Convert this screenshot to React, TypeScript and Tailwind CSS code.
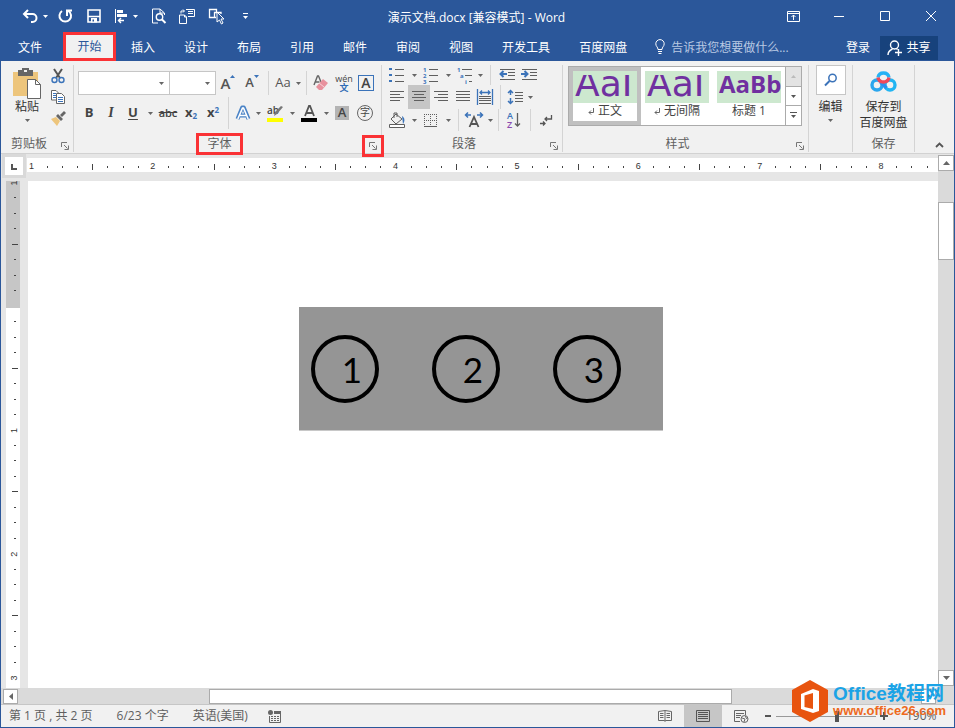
import type { ReactNode } from 'react';

interface IconProps {
  w?: number;
  h?: number;
  children: ReactNode;
}

const TABS = ['插入', '设计', '布局', '引用', '邮件', '审阅', '视图', '开发工具', '百度网盘'];

const STYLES = [
  { sample: 'AaI', label: '正文', mark: true, active: true, text: "font-['DejaVu_Sans'] text-[36px]" },
  { sample: 'AaI', label: '无间隔', mark: true, active: false, text: "font-['DejaVu_Sans'] text-[36px]" },
  { sample: 'AaBb', label: '标题 1', mark: false, active: false, text: "font-['Open_Sans'] font-bold text-[24px]" },
];

const BLUE = '#3b73b9';
const GRAY = '#5f5f5f';

function Icon({ w = 16, h = 16, children }: IconProps) {
  return (
    <svg width={w} height={h} viewBox={`0 0 ${w} ${h}`} fill="none" className="shrink-0 overflow-visible" aria-hidden="true">
      {children}
    </svg>
  );
}

function Tool({ label, className = 'w-[22px]', children }: { label: string; className?: string; children: ReactNode }) {
  return (
    <button type="button" aria-label={label} className={`flex h-full shrink-0 items-center justify-center ${className}`}>
      {children}
    </button>
  );
}

function Caret({ className = 'w-3' }: { className?: string }) {
  return (
    <button type="button" aria-label="更多选项" className={`flex h-full shrink-0 items-center justify-center ${className}`}>
      <Icon w={5} h={3}><path d="M0 0h5L2.5 3z" fill="#666" /></Icon>
    </button>
  );
}

function Divider({ className = 'w-3' }: { className?: string }) {
  return (
    <div className={`flex h-full shrink-0 justify-center ${className}`}>
      <div className="h-full w-px bg-[#d4d4d4]" />
    </div>
  );
}

function Launcher({ marked = false }: { marked?: boolean }) {
  return (
    <button
      type="button"
      aria-label="对话框启动器"
      className={`absolute right-0 -bottom-0.5 flex h-4 w-4 items-center justify-center ${marked ? 'z-10 outline-3 outline-[#fa3235]' : ''}`}
    >
      <Icon w={8} h={8}>
        <path d="M.5 5V.5H6M3 3l3.500 3.500M7.500 3.500v4h-4" stroke="#777" />
      </Icon>
    </button>
  );
}

function Group({ label, className, launcher, marked, children }: {
  label: string; className: string; launcher?: boolean; marked?: boolean; children: ReactNode;
}) {
  return (
    <section className={`mt-1 flex shrink-0 flex-col border-r border-[#d4d4d4] ${className}`}>
      <div className="min-h-0 flex-1">{children}</div>
      <div className={`relative flex h-4 items-center justify-center text-[#5f5f5f] ${launcher ? 'pr-4' : ''}`}>
        <span className={marked ? 'relative z-10 px-2 outline-3 outline-[#fa3235]' : ''}>{label}</span>
        {launcher && <Launcher marked={marked} />}
      </div>
    </section>
  );
}

function Lines({ rows, color = GRAY }: { rows: [number, number][]; color?: string }) {
  return (
    <Icon>
      {rows.map(([x1, x2], i) => (
        <path key={i} d={`M${x1} ${2.5 + i * 3}H${x2}`} stroke={color} />
      ))}
    </Icon>
  );
}

function TitleBar() {
  return (
    <header className="flex h-8 shrink-0 items-center bg-[#2b579a] text-white">
      <div className="flex h-full flex-1 items-center pl-[18px]">
        <Tool label="撤消" className="w-[22px]">
          <Icon><path d="M2 6h8.500a4 4 0 0 1 0 8H9M6 2L2 6l4 4" stroke="#fff" strokeWidth="2" /></Icon>
        </Tool>
        <button type="button" aria-label="撤消列表" className="w-3 pl-0.5"><Icon w={5} h={3}><path d="M0 0h5L2.5 3z" fill="#fff" /></Icon></button>
        <Tool label="重做" className="w-6">
          <Icon><path d="M5 3a5.800 5.800 0 1 0 6.500 0M10 8V2.500h5" stroke="#fff" strokeWidth="2" /></Icon>
        </Tool>
        <Tool label="保存" className="w-[34px]">
          <Icon><path d="M2 2h12v12H2zM2 8.500h12" stroke="#fff" strokeWidth="1.600" /><path d="M5 10h6v4.500H5z" fill="#fff" /><path d="M6.500 11.500h1.500v2H6.500z" fill="#2b579a" /></Icon>
        </Tool>
        <Tool label="对齐" className="w-5">
          <Icon><path d="M2.500 1v14" stroke="#fff" /><path d="M4 2h6v3H4zM4 6h10v3H4z" fill="#fff" /><path d="M11 12.500H5M8 10l-2.500 2.500L8 15" stroke="#fff" strokeWidth="1.400" /></Icon>
        </Tool>
        <button type="button" aria-label="对齐列表" className="w-3 pl-0.5"><Icon w={5} h={3}><path d="M0 0h5L2.5 3z" fill="#fff" /></Icon></button>
        <Tool label="打印预览" className="w-8">
          <Icon><path d="M7 15H1.500V1H9l4.500 4v2M9 1v4h4" stroke="#fff" /><circle cx="8.500" cy="9" r="3.200" stroke="#fff" strokeWidth="1.400" /><path d="M11 11.500l3.500 3.500" stroke="#fff" strokeWidth="2" /></Icon>
        </Tool>
        <Tool label="比较文档" className="w-6">
          <Icon w={18}><path d="M6.500 7H1.500v8.500h7V9L6.500 7v2h2M8 1.500h8.500v7H10M10 3.500h5M10 5.500h5M3 5.500V3h3M5 1.500L6.500 3 5 4.500" stroke="#fff" /></Icon>
        </Tool>
        <Tool label="选择对象" className="w-9">
          <Icon w={18}><path d="M8 9.500H1.500v-8h7V4M6.500 10V4.500H13V6" stroke="#fff" strokeWidth="1.300" /><path d="M9 4l7 7h-3l2 4-1.600 1L11.500 12 9 14z" fill="#2b579a" stroke="#fff" /></Icon>
        </Tool>
        <Tool label="自定义快速访问工具栏" className="w-5">
          <Icon w={7} h={8}><path d="M1 1.500h5" stroke="#fff" /><path d="M1 4h5L3.500 7z" fill="#fff" /></Icon>
        </Tool>
      </div>
      <h1 className="mr-5 pt-1 text-xs">演示文档.docx [兼容模式] - Word</h1>
      <div className="flex h-full flex-1 justify-end">
        <Tool label="功能区显示选项" className="w-[46px]">
          <Icon w={13} h={11}><path d="M.5.5h12v10H.5zM.5 2.500h12M6.500 9V4M4.500 6l2-2 2 2" stroke="#fff" /></Icon>
        </Tool>
        <Tool label="最小化" className="w-[46px]"><Icon w={10} h={10}><path d="M0 5.500h10" stroke="#fff" /></Icon></Tool>
        <Tool label="最大化" className="w-[46px]"><Icon w={10} h={10}><path d="M.5.5h9v9h-9z" stroke="#fff" /></Icon></Tool>
        <Tool label="关闭" className="w-[46px]"><Icon w={10} h={10}><path d="M0 0l10 10M10 0L0 10" stroke="#fff" /></Icon></Tool>
      </div>
    </header>
  );
}

function TabBar() {
  return (
    <nav className="flex h-[29px] shrink-0 items-center bg-[#2b579a] text-xs text-white">
      <button type="button" className="h-full w-[62px] shrink-0 pr-1 pt-0.5">文件</button>
      <button type="button" className="h-full w-[53px] shrink-0 border-3 border-[#fa3235] bg-[#f1f1f1] text-[#2b579a]">开始</button>
      {TABS.map((tab) => (
        <button key={tab} type="button" className="h-full shrink-0 pr-[14px] pl-[15px] pt-0.5 whitespace-nowrap">{tab}</button>
      ))}
      <label className="flex min-w-0 flex-1 items-center gap-1.5 pl-3.5">
        <Icon w={10} h={15}>
          <path d="M3 10.500C3 8 .8 7.500.8 4.800a4.200 4.200 0 0 1 8.400 0C9.200 7.500 7 8 7 10.500zM3 12.500h4M3.500 14.500h3" stroke="#fff" />
        </Icon>
        <input aria-label="告诉我您想要做什么" placeholder="告诉我您想要做什么..." className="w-full min-w-0 pt-0.5 outline-none placeholder:text-[#b9c9e3]" />
      </label>
      <button type="button" className="shrink-0 px-2.5 pt-0.5">登录</button>
      <button type="button" className="mr-4 mb-px flex h-6 w-[58px] shrink-0 items-center justify-center gap-1 self-end bg-[#17427c]">
        <Icon w={15} h={16}>
          <circle cx="7.500" cy="5" r="4" stroke="#fff" strokeWidth="1.400" /><path d="M1 15c0-3 2-5 4.500-6M9.500 8.500l1 1M8 12.500h7M11.500 9v7" stroke="#fff" strokeWidth="1.400" />
        </Icon>
        共享
      </button>
    </nav>
  );
}

function Clipboard() {
  return (
    <Group label="剪贴板" className="w-[73px]" launcher>
      <div className="flex">
        <button type="button" className="flex w-[46px] flex-col items-center gap-1 pt-0.5 pl-1.5 text-[#333]">
          <Icon w={30} h={32}>
            <path d="M1 5h25v24H1z" fill="#edc57c" />
            <path d="M6 3h4V1h7v2h4v6H6z" fill="#666" /><path d="M12 3h3v2h-3z" fill="#f1f1f1" />
            <path d="M15.500 12.500h8l5 5v14h-13z" fill="#fff" stroke="#666" /><path d="M23.500 12.500v5h5" stroke="#666" />
          </Icon>
          <span className="-mt-1">粘贴</span>
          <Icon w={5} h={3}><path d="M0 0h5L2.5 3z" fill="#666" /></Icon>
        </button>
        <div className="grid h-16 grid-rows-3">
          <Tool label="剪切">
            <Icon><path d="M4 1l6 9M12 1L6 10" stroke="#555" strokeWidth="2" /><circle cx="4.500" cy="12" r="2.500" stroke={BLUE} strokeWidth="1.400" /><circle cx="11.500" cy="12" r="2.500" stroke={BLUE} strokeWidth="1.400" /></Icon>
          </Tool>
          <Tool label="复制">
            <Icon><path d="M1.500 1.500H6L8.500 4v7h-7z" fill="#fff" stroke="#666" /><path d="M3 4.500h3M3 6.500h4M3 8.500h4" stroke={BLUE} /><path d="M6.500 4.500h5l3 3v7h-8z" fill="#fff" stroke="#666" /><path d="M8 8.500h5M8 10.500h5M8 12.500h5" stroke={BLUE} /></Icon>
          </Tool>
          <Tool label="格式刷">
            <Icon><path d="M1 9l5-2 4 4-3 5z" fill="#edc57c" /><path d="M6 6l2-2 5 5-2 2zM10 5l4-4 2 2-4 4z" fill="#666" /></Icon>
          </Tool>
        </div>
      </div>
    </Group>
  );
}

function FontGroup() {
  return (
    <Group label="字体" className="w-[308px]" launcher marked>
      <div className="flex flex-col gap-0.5 pt-1.5 pl-1">
        <div className="flex h-6 items-center">
          <div className="flex h-6 w-[92px] border border-[#c6c6c6] bg-white">
            <input aria-label="字体名称" className="min-w-0 flex-1 outline-none" />
            <Caret className="w-4" />
          </div>
          <div className="flex h-6 w-[46px] border border-l-0 border-[#c6c6c6] bg-white">
            <input aria-label="字号" className="min-w-0 flex-1 outline-none" />
            <Caret className="w-4" />
          </div>
          <Tool label="增大字号" className="w-6">
            <span className="text-[15px] font-semibold text-[#555]">A</span><span className="self-start pt-1"><Icon w={5} h={3}><path d="M0 3h5L2.500 0z" fill={BLUE} /></Icon></span>
          </Tool>
          <Tool label="减小字号" className="w-6">
            <span className="text-[13px] font-semibold text-[#555]">A</span><span className="self-start pt-1"><Icon w={5} h={3}><path d="M0 0h5L2.5 3z" fill={BLUE} /></Icon></span>
          </Tool>
          <Divider className="w-2" />
          <Tool label="更改大小写" className="w-[22px]"><span className="text-[13px] text-[#555]">Aa</span></Tool>
          <Caret className="w-2" />
          <Divider className="w-2" />
          <Tool label="清除格式">
            <Icon><path d="M1 10L4.500 1h1L8 7M2.500 7h4" stroke="#666" strokeWidth="1.400" /><path d="M10 4l5 4-6 7H6l-3-3z" fill="#e8919d" /><path d="M6 8l5 4" stroke="#f7d3d8" /></Icon>
          </Tool>
          <Tool label="拼音指南" className="w-6">
            <span className="flex flex-col items-center text-[9px] leading-[9px] text-[#444]">wén<span className="font-bold text-[#2f6cb5]">文</span></span>
          </Tool>
          <Tool label="字符边框" className="w-5">
            <span className="flex h-4 w-4 items-center justify-center border border-[#3b73b9] text-sm font-semibold text-[#444]">A</span>
          </Tool>
        </div>
        <div className="flex h-8 items-center text-[#444]">
          <Tool label="加粗"><span className="text-[13px] font-bold">B</span></Tool>
          <Tool label="倾斜"><span className="font-['Liberation_Serif'] text-sm font-bold italic">I</span></Tool>
          <Tool label="下划线"><span className="text-[13px] font-bold underline underline-offset-2">U</span></Tool>
          <Caret />
          <Tool label="删除线" className="w-6"><span className="text-[11px] font-semibold line-through">abc</span></Tool>
          <Tool label="下标"><span className="text-[13px] font-bold">x<sub className="text-[8px] text-[#3b73b9]">2</sub></span></Tool>
          <Tool label="上标"><span className="text-[13px] font-bold">x<sup className="text-[8px] text-[#3b73b9]">2</sup></span></Tool>
          <Divider className="w-2" />
          <Tool label="文本效果">
            <Icon><path d="M2.500 14L7.200 2.500h1.600L13.500 14M5 10.500h6" stroke="#4a83c6" strokeWidth="4" strokeLinejoin="round" /><path d="M2.800 14L7.500 3h1l4.700 11M5 10.500h6" stroke="#fff" strokeWidth="1.600" /></Icon>
          </Tool>
          <Caret className="w-2" />
          <Tool label="突出显示" className="w-[26px]">
            <Icon w={17} h={17}><text x="0" y="9" fontSize="10" fontFamily="Open Sans" fontWeight="600" fill="#444">ab</text><path d="M16 2l-6 7-3 2 1-4 6-6z" fill="#777" /><path d="M0 13h16v4H0z" fill="#ff0" /></Icon>
          </Tool>
          <Caret className="w-2" />
          <Tool label="字体颜色" className="w-[26px]">
            <Icon w={17} h={17}><path d="M4 11L8 1h1l4 10M5.500 8h6" stroke="#555" strokeWidth="1.800" /><path d="M0 13h16v4H0z" fill="#000" /></Icon>
          </Tool>
          <Caret className="w-2" />
          <Tool label="字符底纹" className="w-6"><span className="flex h-3.5 w-3.5 items-center justify-center bg-[#b4b4b4] text-[13px] font-semibold">A</span></Tool>
          <Tool label="带圈字符"><span className="flex h-4 w-4 items-center justify-center rounded-full border border-[#666] text-[10px]">字</span></Tool>
        </div>
      </div>
    </Group>
  );
}

function ParagraphGroup() {
  return (
    <Group label="段落" className="w-[181px]" launcher>
      <div className="flex flex-col pl-1">
        <div className="flex h-5 items-center">
          <Tool label="项目符号">
            <Icon><path d="M0 1h3v2H0zM0 7h3v2H0zM0 13h3v2H0z" fill={BLUE} /><path d="M6 2.500h9M6 8.500h9M6 14.500h9" stroke={GRAY} /></Icon>
          </Tool>
          <Caret />
          <Tool label="编号">
            <Icon><text x="0" y="5" fontSize="6" fontWeight="bold" fill={BLUE}>1</text><text x="0" y="11" fontSize="6" fontWeight="bold" fill={BLUE}>2</text><text x="0" y="17" fontSize="6" fontWeight="bold" fill={BLUE}>3</text><path d="M6 2.500h9M6 8.500h9M6 14.500h9" stroke={GRAY} /></Icon>
          </Tool>
          <Caret />
          <Tool label="多级列表">
            <Icon><text x="0" y="5" fontSize="6" fontWeight="bold" fill={BLUE}>1</text><text x="3" y="11" fontSize="6" fontWeight="bold" fill={BLUE}>a</text><text x="8" y="17" fontSize="6" fontWeight="bold" fill={BLUE}>i</text><path d="M5 2.500h10M8 8.500h7M12 14.500h3" stroke={GRAY} /></Icon>
          </Tool>
          <Caret className="w-2" />
          <Divider className="w-3" />
          <Tool label="减少缩进">
            <Icon><path d="M1 2.500h15M9 5.500h7M9 8.500h7M1 12.500h15" stroke={GRAY} /><path d="M8 7H2M4.500 4L1.500 7l3 3" stroke={BLUE} strokeWidth="2" /></Icon>
          </Tool>
          <Tool label="增加缩进">
            <Icon><path d="M1 2.500h15M9 5.500h7M9 8.500h7M1 12.500h15" stroke={GRAY} /><path d="M0 7h6M3.500 4l3 3-3 3" stroke={BLUE} strokeWidth="2" /></Icon>
          </Tool>
        </div>
        <div className="flex h-6 items-center">
          <Tool label="左对齐"><Lines rows={[[1, 15], [1, 11], [1, 15], [1, 11]]} /></Tool>
          <Tool label="居中" className="w-[22px] bg-[#c6c6c6]"><Lines rows={[[1, 15], [3, 13], [1, 15], [3, 13]]} /></Tool>
          <Tool label="右对齐"><Lines rows={[[1, 15], [5, 15], [1, 15], [5, 15]]} /></Tool>
          <Tool label="两端对齐"><Lines rows={[[1, 15], [1, 15], [1, 15], [1, 15]]} /></Tool>
          <Tool label="分散对齐">
            <Icon><path d="M.5 0v16M15.500 0v16M3 3.500h10M5 1.500L3 3.500l2 2M11 1.500l2 2-2 2" stroke={BLUE} strokeWidth="1.300" /><path d="M2 7.500h12M2 9.500h12M2 11.500h12M2 14.500h12" stroke={GRAY} /></Icon>
          </Tool>
          <Divider className="w-2" />
          <Tool label="行距">
            <Icon><path d="M3.500 1v5M1 4l2.500-2.500L6 4M3.500 9v6M1 12l2.500 2.500L6 12" stroke={BLUE} strokeWidth="1.500" /><path d="M8 3.500h8M8 6.500h8M8 9.500h8M8 12.500h8" stroke={GRAY} /></Icon>
          </Tool>
          <Caret className="w-2" />
        </div>
        <div className="flex h-[22px] items-center">
          <Tool label="底纹">
            <Icon><path d="M7 2l6 5-6 5-5-5zM5 6V1h3v4" stroke={GRAY} /><path d="M13 4c3 2 3 5 1 8z" fill={BLUE} /><path d="M.5 12.500h15v3H.5z" fill="#fff" stroke={GRAY} /></Icon>
          </Tool>
          <Caret />
          <Tool label="边框">
            <Icon><path d="M1 2.500h13M1 8.500h13M1.500 2v12M7.500 2v12M13.500 2v12" stroke={GRAY} strokeDasharray="1 1" /><path d="M1 14.500h13" stroke={GRAY} /></Icon>
          </Tool>
          <Caret />
          <Divider className="w-2" />
          <Tool label="中文版式" className="w-6">
            <Icon><path d="M3.500 15L8 5l4.500 10M5 12h6" stroke="#555" strokeWidth="1.800" /><path d="M5 3H0M2 .5L-.5 3 2 5.500M11 3h5M14 .5L16.500 3 14 5.500" stroke={BLUE} strokeWidth="1.500" /></Icon>
          </Tool>
          <Caret className="w-2" />
          <Divider className="w-2" />
          <Tool label="排序" className="w-6">
            <Icon><text x="1" y="7" fontSize="9" fontWeight="600" fill={BLUE}>A</text><text x="1" y="16" fontSize="9" fontWeight="600" fill="#8b4bb0">Z</text><path d="M11.500 1v13M9 11.500l2.500 2.500 2.500-2.500" stroke={GRAY} strokeWidth="1.300" /></Icon>
          </Tool>
          <Divider className="w-2" />
          <Tool label="显示编辑标记">
            <Icon><path d="M14.500 3v4H8M10 5L8 7l2 2M3 11.500h5M6 9.500l2 2-2 2" stroke="#555" strokeWidth="1.300" /></Icon>
          </Tool>
        </div>
      </div>
    </Group>
  );
}

function StylesGroup() {
  return (
    <Group label="样式" className="w-[246px]" launcher>
      <div className="mt-px ml-[5px] flex h-[60px] w-[234px] border border-[#ababab] bg-white">
        {STYLES.map((style) => (
          <button
            key={style.label}
            type="button"
            className={`flex w-[72px] flex-col border-4 text-xs text-[#444] ${style.active ? 'border-[#c0c0c0]' : 'border-transparent'}`}
          >
            <span className="flex h-8 w-full shrink-0 items-center overflow-hidden bg-[#cde8cf] pl-0.5">
              <span className={`flex h-6 w-[62px] items-start overflow-hidden leading-[18px] text-[#7030a0] ${style.text}`}>{style.sample}</span>
            </span>
            <span className="flex w-full items-center justify-center gap-1">
              {style.mark && <Icon w={6} h={7}><path d="M5.500 0v4.500H1M3 2.500l-2 2 2 2" stroke="#666" /></Icon>}
              {style.label}
            </span>
          </button>
        ))}
        <div className="ml-auto flex w-4 flex-col divide-y divide-[#ababab] border-l border-[#ababab]">
          <button type="button" aria-label="上一行" className="flex flex-1 items-center justify-center bg-[#e3e3e3]"><Icon w={5} h={3}><path d="M0 3h5L2.500 0z" fill="#bbb" /></Icon></button>
          <button type="button" aria-label="下一行" className="flex flex-1 items-center justify-center"><Icon w={5} h={3}><path d="M0 0h5L2.5 3z" fill="#555" /></Icon></button>
          <button type="button" aria-label="其他" className="flex flex-1 items-center justify-center"><Icon w={7} h={7}><path d="M0 .5h7" stroke="#555" /><path d="M1 3h5L3.500 6z" fill="#555" /></Icon></button>
        </div>
      </div>
    </Group>
  );
}

function Ribbon() {
  return (
    <div className="flex h-[93px] shrink-0 border-b border-[#d2d2d2] bg-[#f1f1f1] pb-px text-xs">
      <Clipboard />
      <FontGroup />
      <ParagraphGroup />
      <StylesGroup />
      <div className="mt-1 flex w-11 shrink-0 justify-center border-r border-[#d4d4d4] text-[#333]">
        <button type="button" className="flex flex-col items-center">
          <span className="flex h-[30px] w-[30px] items-center justify-center border border-[#c6c6c6] bg-white">
            <Icon><circle cx="9.500" cy="6" r="3.700" stroke={BLUE} strokeWidth="1.500" /><path d="M6.500 9L2 13.500" stroke={BLUE} strokeWidth="2" /></Icon>
          </span>
          <span className="pt-1">编辑</span>
          <span className="pt-1"><Icon w={5} h={3}><path d="M0 0h5L2.5 3z" fill="#666" /></Icon></span>
        </button>
      </div>
      <Group label="保存" className="w-[62px]">
        <button type="button" className="flex w-full flex-col items-center pt-1 text-[#333]">
          <Icon w={28} h={26}>
            <circle cx="7" cy="16" r="5" stroke="#2aa6ee" strokeWidth="3.400" /><circle cx="20" cy="16" r="5" stroke="#22b5f2" strokeWidth="3.400" /><path d="M10.500 13l6 6" stroke="#2a8ff0" strokeWidth="3.400" /><path d="M8 8.500a5.600 5.600 0 0 1 11 0" stroke="#25b2f5" strokeWidth="3.400" /><path d="M8 8.500a5.600 5.600 0 0 0 11 0" stroke="#f0485a" strokeWidth="3.400" />
          </Icon>
          <span className="mt-1 leading-4">保存到<br />百度网盘</span>
        </button>
      </Group>
      <div className="flex flex-1 items-end justify-end pr-2.5 pb-1">
        <button type="button" aria-label="折叠功能区"><Icon w={9} h={6}><path d="M1 5l3.500-3.500L8 5" stroke="#555" strokeWidth="1.800" /></Icon></button>
      </div>
    </div>
  );
}

const H_TICKS = Array.from({ length: 60 }, (_, i) => i);
const V_TICKS = Array.from({ length: 33 }, (_, i) => i);

function HorizontalRuler() {
  return (
    <div className="flex h-[27px] shrink-0 bg-[#e6e6e6] pr-4">
      <button type="button" aria-label="制表符" className="ml-px flex h-6 w-6 items-center justify-center border-3 border-[#d9d9d9] bg-white">
        <Icon w={6} h={7}><path d="M1 1v5h5" stroke="#555" strokeWidth="2" /></Icon>
      </button>
      <div className="mt-1 ml-px h-3.5 flex-1 overflow-hidden bg-white">
        <Icon w={910} h={14}>
          {H_TICKS.map((i) => {
            const x = 4.5 + i * 15.17;
            if (i % 8 === 0) {
              return <text key={i} x={x} y={11} textAnchor="middle" fontSize="9" fontFamily="Liberation Sans" fill="#333">{i / 8 + 1}</text>;
            }
            return <path key={i} d={i % 8 === 4 ? `M${Math.round(x) + 0.5} 6v6` : `M${Math.round(x) + 0.5} 8v2`} stroke="#444" />;
          })}
        </Icon>
      </div>
    </div>
  );
}

function VerticalRuler() {
  return (
    <div className="w-[27px] shrink-0 overflow-hidden bg-[#e6e6e6] pl-[5px]">
      <div className="h-full w-3.5 overflow-hidden bg-white">
        <Icon w={14} h={510}>
          <path d="M0 0h14v127H0z" fill="#c6c6c6" />
          {V_TICKS.map((i) => {
            const y = 2 + i * 15.47;
            if (i === 8) return null;
            if (i % 8 === 0) {
              return <text key={i} transform={`translate(11 ${y}) rotate(-90)`} textAnchor="middle" fontSize="9" fontFamily="Liberation Sans" fill="#333">{i === 0 ? 1 : i / 8 - 1}</text>;
            }
            return <path key={i} d={i % 8 === 4 ? `M6 ${Math.round(y) - 0.5}h6` : `M8 ${Math.round(y) - 0.5}h2`} stroke="#444" />;
          })}
        </Icon>
      </div>
    </div>
  );
}

function DocumentPage() {
  return (
    <main className="min-w-0 flex-1 overflow-hidden bg-white pt-[126px] pr-1">
      <div className="mx-auto flex w-[364px] gap-[53px] border-b border-[#c8c8c8] bg-[#959595] px-3 pt-7 pb-[27px]">
        {[1, 2, 3].map((n) => (
          <span key={n} className="flex h-[68px] w-[68px] items-center justify-center rounded-full border-4 border-black pl-3.5 font-['Lato'] text-[35px] text-black">{n}</span>
        ))}
      </div>
    </main>
  );
}

function VerticalScrollbar() {
  return (
    <div className="-mt-[26px] flex w-4 shrink-0 flex-col bg-[#dadada]">
      <button type="button" aria-label="向上滚动" className="flex h-4 items-center justify-center border border-[#ababab] bg-white"><Icon w={7} h={4}><path d="M0 4h7L3.500 0z" fill="#666" /></Icon></button>
      <div className="mt-[31px] h-[58px] border border-[#ababab] bg-white" />
      <button type="button" aria-label="向下滚动" className="mt-auto mb-0.5 flex h-4 items-center justify-center border border-[#ababab] bg-white"><Icon w={7} h={4}><path d="M0 0h7L3.500 4z" fill="#666" /></Icon></button>
    </div>
  );
}

function HorizontalScrollbar() {
  return (
    <div className="flex h-4 shrink-0 items-center bg-[#dadada] pr-[18px] pl-0.5">
      <button type="button" aria-label="向左滚动" className="flex h-[15px] w-[15px] items-center justify-center border border-[#ababab] bg-white"><Icon w={4} h={7}><path d="M4 0v7L0 3.500z" fill="#666" /></Icon></button>
      <div className="flex h-[15px] flex-1 pl-0.5">
        <div className="w-[21%]" />
        <div className="w-[58%] border border-[#ababab] bg-white" />
      </div>
      <button type="button" aria-label="向右滚动" className="flex h-[15px] w-[15px] items-center justify-center border border-[#ababab] bg-white"><Icon w={4} h={7}><path d="M0 0v7l4-3.500z" fill="#666" /></Icon></button>
    </div>
  );
}

function StatusBar() {
  return (
    <footer className="flex h-[23px] shrink-0 items-center border-t border-[#c6c6c6] bg-[#f1f1f1] pl-2 text-xs whitespace-nowrap text-[#5f5f5f]">
      <span>第 1 页 , 共 2 页</span>
      <span className="ml-6">6/23 个字</span>
      <span className="ml-6">英语(美国)</span>
      <button type="button" aria-label="录制宏" className="ml-5">
        <Icon w={13} h={13}><circle cx="2.500" cy="2.500" r="2.500" fill="#666" /><path d="M6 1h7v3H6z" fill="#666" /><path d="M1.500 6v6.500h11V4" stroke="#666" /><path d="M3 6.500h8M3 8.500h8M3 10.500h8" stroke="#666" strokeDasharray="2 1" /></Icon>
      </button>
      <div className="ml-auto flex h-full items-center">
        <Tool label="阅读视图" className="w-[38px]">
          <Icon w={14} h={12}><path d="M.5 1.500L7 .5l6.500 1v9H7.500L7 11.500l-.5-1h-6zM7 1v10M2 3.500h3.500M2 5.500h3.500M2 7.500h3.500M8.500 3.500H12M8.500 5.500H12M8.500 7.500H12" stroke="#666" /></Icon>
        </Tool>
        <Tool label="页面视图" className="w-[38px] bg-[#c6c6c6]">
          <Icon w={14} h={12}><path d="M.5.5h13v11H.5zM2 2.500h10M2 4.500h10M2 6.500h10M2 8.500h10" stroke="#555" /></Icon>
        </Tool>
        <Tool label="Web 版式视图" className="w-[38px]">
          <Icon w={15} h={13}><path d="M6 11.500H.5V.5h11V5M2 3.500h8M2 5.500h5M2 7.500h4" stroke="#666" /><circle cx="10.500" cy="9" r="3.500" fill="#f1f1f1" stroke="#666" /><path d="M8 8l3 1-1 3M11 6l2 3" stroke="#666" /></Icon>
        </Tool>
        <button type="button" aria-label="缩小" className="flex h-full w-4 items-center justify-center"><span className="h-0.5 w-1.5 bg-[#555]" /></button>
        <input
          type="range"
          aria-label="显示比例"
          min={10}
          max={500}
          defaultValue={310}
          className="h-px w-[100px] appearance-none bg-[#999] [&::-webkit-slider-thumb]:h-[11px] [&::-webkit-slider-thumb]:w-1 [&::-webkit-slider-thumb]:appearance-none [&::-webkit-slider-thumb]:bg-[#555]"
        />
        <button type="button" aria-label="放大" className="flex h-full w-4 items-center justify-center"><Icon w={8} h={8}><path d="M0 4h8M4 0v8" stroke="#555" strokeWidth="2" /></Icon></button>
        <button type="button" className="w-[62px] pl-[14px] text-left">190%</button>
      </div>
    </footer>
  );
}

// Site badge floating over the bottom right corner
function SiteBadge() {
  return (
    <div className="absolute right-2 bottom-1 flex items-center gap-1">
      <Icon w={38} h={44}>
        <path d="M19 1l18 10v22L19 43 1 33V11z" fill="#e8540f" />
        <path fillRule="evenodd" d="M10 15l12-5 6 2v20l-6 2-12-4zM13.500 16.500v11.500l8.500 2V14z" fill="#fff" />
      </Icon>
      <div className="font-['Liberation_Sans','Noto_Sans_CJK_SC',sans-serif] font-bold">
        <div className="text-[19px] leading-5 text-[#1ba3e6]">Office教程网</div>
        <div className="text-[13px] leading-[14px] text-[#ee6a1c]">www.office26.com</div>
      </div>
    </div>
  );
}

export default function App() {
  return (
    <div className="relative flex h-screen flex-col overflow-hidden border-x border-b border-[#2b579a] bg-[#e6e6e6] font-['Open_Sans','Noto_Sans_CJK_SC',sans-serif]">
      <TitleBar />
      <TabBar />
      <Ribbon />
      <HorizontalRuler />
      <div className="flex min-h-0 flex-1">
        <VerticalRuler />
        <DocumentPage />
        <VerticalScrollbar />
      </div>
      <HorizontalScrollbar />
      <StatusBar />
      <SiteBadge />
    </div>
  );
}
